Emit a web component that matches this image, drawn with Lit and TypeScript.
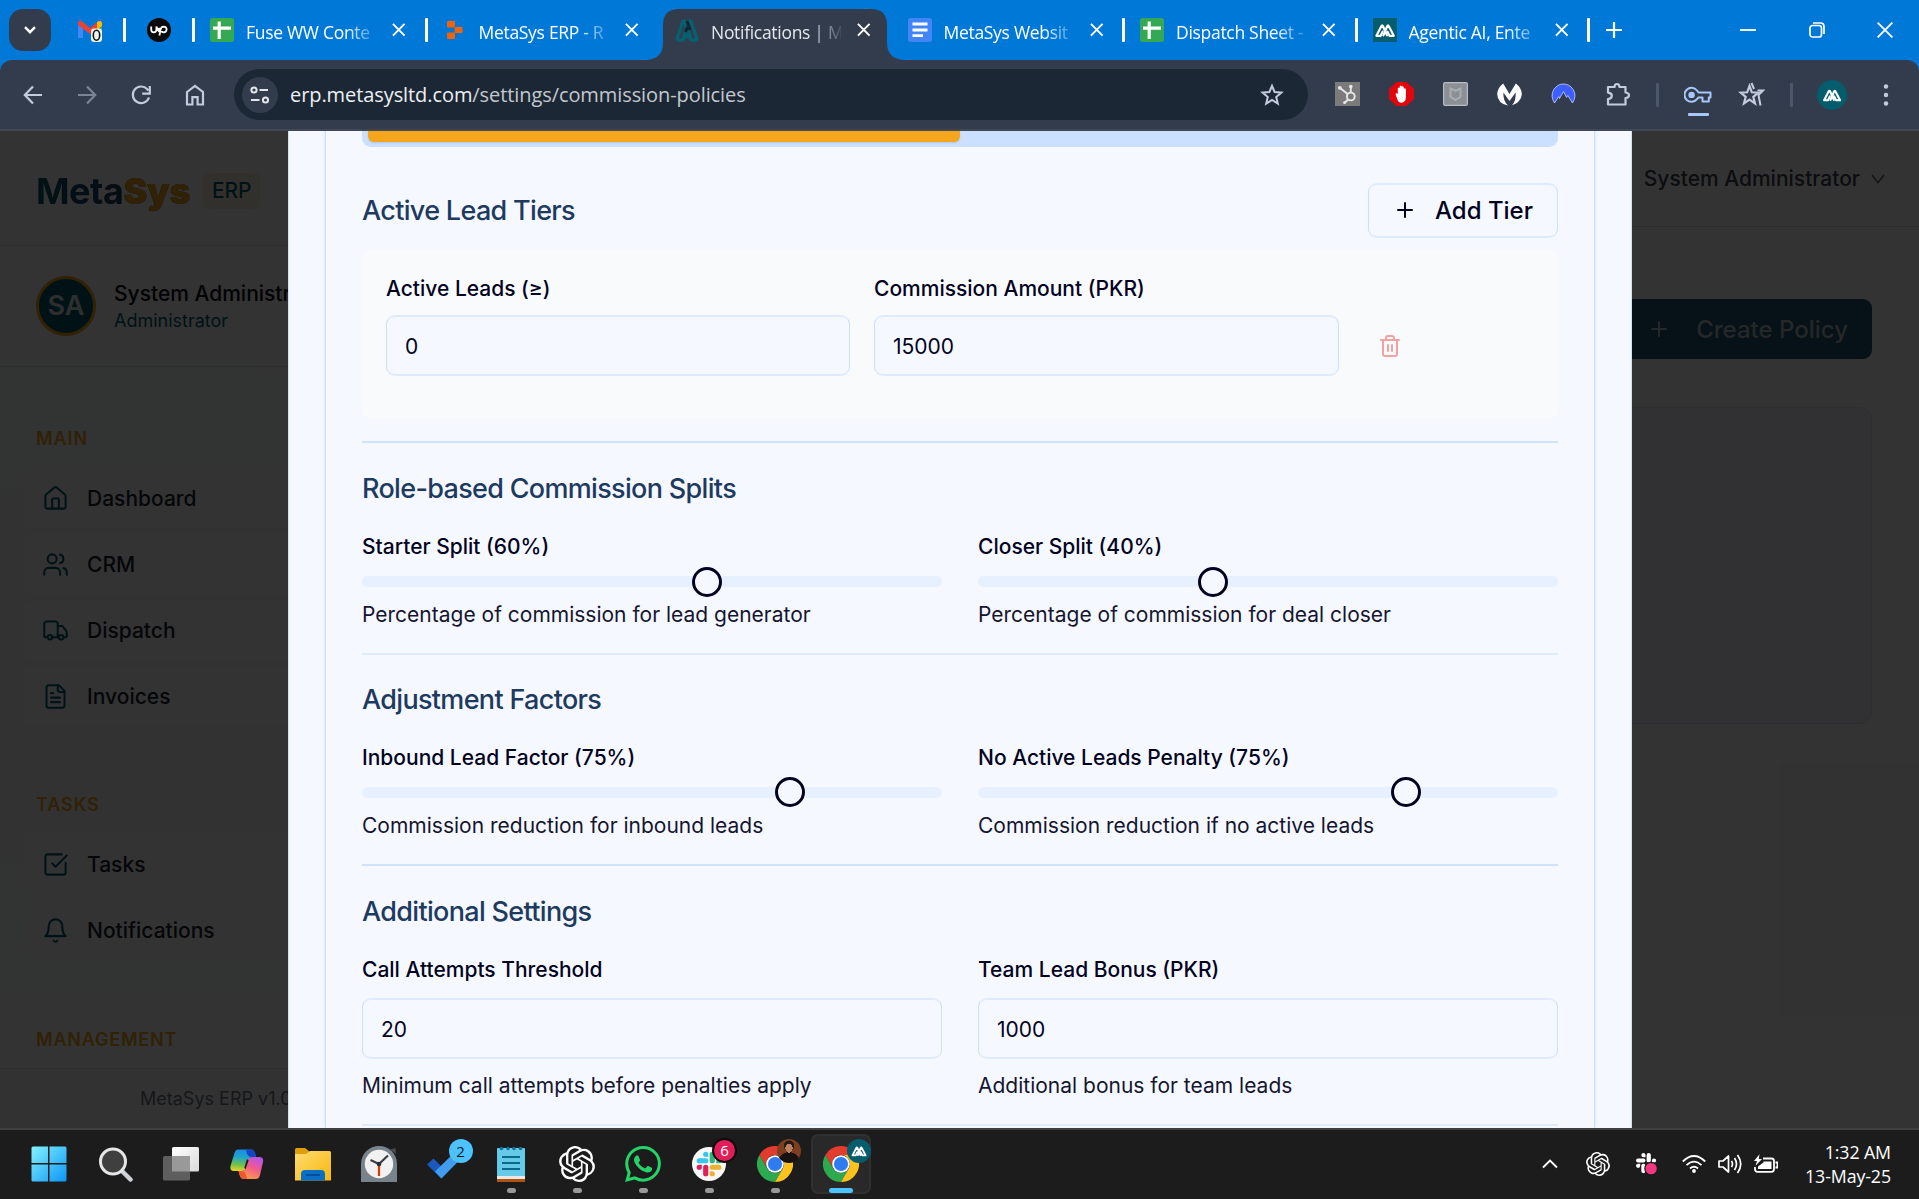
import { LitElement, html, svg, css, nothing, TemplateResult, SVGTemplateResult } from "lit";
import { customElement, property } from "lit/decorators.js";

const icon = (w: number, h: number, box: string, body: SVGTemplateResult, cls = "") =>
  html`<svg class="icon ${cls}" width=${w} height=${h} viewBox=${box} fill="none">${body}</svg>`;

const reset = css`
  * { box-sizing: border-box; }
  .icon { display: block; flex: none; }
`;

/* ---------- shared marks ---------- */

const metaMark = (color: string, width = 2.2) => svg`
  <path d="M14 17.4 10 8.2Q9.2 6.4 8.3 8.2L3.4 17.8H7.6L9.6 13.6" stroke=${color} stroke-width=${width} stroke-linejoin="round" stroke-linecap="round"/>
  <path d="M10.4 17.4 14.2 8.2Q15 6.4 15.8 8.2L20.8 17.8H16.6L14.4 13.6" stroke=${color} stroke-width=${width} stroke-linejoin="round" stroke-linecap="round"/>`;

const knot = svg`<path fill="currentColor" d="M22.2819 9.8211a5.9847 5.9847 0 0 0-.5157-4.9108 6.0462 6.0462 0 0 0-6.5098-2.9A6.0651 6.0651 0 0 0 4.9807 4.1818a5.9847 5.9847 0 0 0-3.9977 2.9 6.0462 6.0462 0 0 0 .7427 7.0966 5.98 5.98 0 0 0 .511 4.9107 6.051 6.051 0 0 0 6.5146 2.9001A5.9847 5.9847 0 0 0 13.2599 24a6.0557 6.0557 0 0 0 5.7718-4.2058 5.9894 5.9894 0 0 0 3.9977-2.9001 6.0557 6.0557 0 0 0-.7475-7.0729zm-9.022 12.6081a4.4755 4.4755 0 0 1-2.8764-1.0408l.1419-.0804 4.7783-2.7582a.7948.7948 0 0 0 .3927-.6813v-6.7369l2.02 1.1686a.071.071 0 0 1 .038.052v5.5826a4.504 4.504 0 0 1-4.4945 4.4944zm-9.6607-4.1254a4.4708 4.4708 0 0 1-.5346-3.0137l.142.0852 4.783 2.7582a.7712.7712 0 0 0 .7806 0l5.8428-3.3685v2.3324a.0804.0804 0 0 1-.0332.0615L9.74 19.9502a4.4992 4.4992 0 0 1-6.1408-1.6464zM2.3408 7.8956a4.485 4.485 0 0 1 2.3655-1.9728V11.6a.7664.7664 0 0 0 .3879.6765l5.8144 3.3543-2.0201 1.1685a.0757.0757 0 0 1-.071 0l-4.8303-2.7865A4.504 4.504 0 0 1 2.3408 7.872zm16.5963 3.8558L13.1038 8.364 15.1192 7.2a.0757.0757 0 0 1 .071 0l4.8303 2.7913a4.4944 4.4944 0 0 1-.6765 8.1042v-5.6772a.79.79 0 0 0-.407-.667zm2.0107-3.0231l-.142-.0852-4.7735-2.7818a.7759.7759 0 0 0-.7854 0L9.409 9.2297V6.8974a.0662.0662 0 0 1 .0284-.0615l4.8303-2.7866a4.4992 4.4992 0 0 1 6.6802 4.66zM8.3065 12.863l-2.02-1.1638a.0804.0804 0 0 1-.038-.0567V6.0742a4.4992 4.4992 0 0 1 7.3757-3.4537l-.142.0805L8.704 5.459a.7948.7948 0 0 0-.3927.6813zm1.0976-2.3654l2.602-1.4998 2.6069 1.4998v2.9994l-2.5974 1.4997-2.6067-1.4997Z"/>`;

const hash = (r: string, b: string, g: string, y: string) => svg`
  <path fill=${r} d="M5.042 15.165a2.528 2.528 0 0 1-2.52 2.523A2.528 2.528 0 0 1 0 15.165a2.527 2.527 0 0 1 2.522-2.52h2.52v2.52zM6.313 15.165a2.527 2.527 0 0 1 2.521-2.52 2.527 2.527 0 0 1 2.521 2.52v6.313A2.528 2.528 0 0 1 8.834 24a2.528 2.528 0 0 1-2.521-2.522v-6.313z"/>
  <path fill=${b} d="M8.834 5.042a2.528 2.528 0 0 1-2.521-2.52A2.528 2.528 0 0 1 8.834 0a2.528 2.528 0 0 1 2.521 2.522v2.52H8.834zM8.834 6.313a2.528 2.528 0 0 1 2.521 2.521 2.528 2.528 0 0 1-2.521 2.521H2.522A2.528 2.528 0 0 1 0 8.834a2.528 2.528 0 0 1 2.522-2.521h6.312z"/>
  <path fill=${g} d="M18.956 8.834a2.528 2.528 0 0 1 2.522-2.521A2.528 2.528 0 0 1 24 8.834a2.528 2.528 0 0 1-2.522 2.521h-2.522V8.834zM17.688 8.834a2.528 2.528 0 0 1-2.523 2.521 2.527 2.527 0 0 1-2.52-2.521V2.522A2.527 2.527 0 0 1 15.165 0a2.528 2.528 0 0 1 2.523 2.522v6.312z"/>
  <path fill=${y} d="M15.165 18.956a2.528 2.528 0 0 1 2.523 2.522A2.528 2.528 0 0 1 15.165 24a2.527 2.527 0 0 1-2.52-2.522v-2.522h2.52zM15.165 17.688a2.527 2.527 0 0 1-2.52-2.523 2.526 2.526 0 0 1 2.52-2.52h6.313A2.527 2.527 0 0 1 24 15.165a2.528 2.528 0 0 1-2.522 2.523h-6.313z"/>`;

const cross = (s: number, w: number) =>
  icon(s, s, "0 0 16 16", svg`<path d="M2 2 14 14M14 2 2 14" stroke="currentColor" stroke-width=${w}/>`);

/* ---------- tab strip ---------- */

const sheet = icon(24, 24, "0 0 24 24", svg`<rect width="24" height="24" rx="2.5" fill="#34a853"/><path d="M9.2 3.5V21M3 10.2H21" stroke="#fff" stroke-width="3.2"/>`);
const doc = icon(24, 24, "0 0 24 24", svg`<rect width="24" height="24" rx="2.5" fill="#4285f4"/><path d="M4.5 6H19.5M4.5 12H19.5M4.5 17.6H15" stroke="#fff" stroke-width="2.8"/>`);
const blocks = icon(24, 24, "0 0 24 24", svg`<g fill="#f26207"><rect x="4" y="3" width="8" height="6.4" rx="1"/><rect x="11.6" y="8.9" width="8" height="6.2" rx="1"/><rect x="4" y="14.6" width="8" height="6.4" rx="1"/></g>`);
const tealMark = icon(24, 24, "0 0 24 24", svg`
  <path d="M14 20 9.6 3.2H8L2.2 20.2Q2 22 4 22H8.2L11 11" stroke="#06606f" stroke-width="3.4" stroke-linejoin="round"/>
  <path d="M10 20 14.4 3.2H16L21.8 20.2Q22 22 20 22H15.8L13 11" stroke="#06606f" stroke-width="3.4" stroke-linejoin="round"/>
  <path d="M12 3 15 12M12.5 9 10.5 14" stroke="#14262f" stroke-width="3"/>`);
const tileMark = icon(24, 24, "0 0 24 24", svg`<rect width="24" height="24" fill="#045c6c"/>${metaMark("#fff", 2.2)}`);

interface Tab { fav: TemplateResult; title: string; active?: boolean; sep?: boolean }
const tabs: Tab[] = [
  { fav: sheet, title: "Fuse WW Conte", sep: true },
  { fav: blocks, title: "MetaSys ERP - R" },
  { fav: tealMark, title: "Notifications | M", active: true },
  { fav: doc, title: "MetaSys Websit", sep: true },
  { fav: sheet, title: "Dispatch Sheet -", sep: true },
  { fav: tileMark, title: "Agentic AI, Ente", sep: true },
];

@customElement("tab-strip")
class TabStrip extends LitElement {
  static styles = [reset, css`
    :host { display: flex; align-items: center; height: 60px; background: #0078d7; color: #fff; padding-left: 9px; font-family: "Open Sans", sans-serif; }
    .search { width: 42px; height: 42px; border-radius: 14px; background: #323c4d; display: grid; place-items: center; margin-right: 27px; }
    .sep { width: 3px; height: 24px; border-radius: 1px; background: #fff; flex: none; }
    .pin { margin-right: 21px; }
    .sep + .pin { margin-left: 21px; }
    .tab { position: relative; display: flex; align-items: center; width: 232.5px; height: 60px; padding-left: 15px; flex: none; }
    .tab > * { position: relative; }
    .tab > .shape { position: absolute; left: -14px; bottom: 0; }
    .title { width: 130px; margin: 4px 15px 0 12px; font-size: 17.5px; line-height: 24px; white-space: nowrap; letter-spacing: -0.3px;
      mask-image: linear-gradient(90deg, #000 76%, transparent 104%); -webkit-mask-image: linear-gradient(90deg, #000 76%, transparent 104%); }
    .active .title { color: #e3e6ec; }
    .active .title, .tab:not(.active) .title { flex: none; }
    .tab .icon { margin-right: 0; }
    .tab .sep { margin-left: 18px; }
    .plus { margin-left: 15px; }
    .controls { display: flex; align-items: center; gap: 52.5px; margin-left: auto; padding-right: 26px; }
  `];
  render() {
    return html`
      <div class="search">${icon(14, 10, "0 0 14 10", svg`<path d="M2 2.2 7 7.2 12 2.2" stroke="#fff" stroke-width="2.4"/>`)}</div>
      ${icon(24, 24, "0 0 24 24", svg`
        <path d="M0 6.5V20H5V9.5Z" fill="#4285f4"/><path d="M19 9.5V20H24V6Z" fill="#34a853"/>
        <path d="M0 3.5Q2 2 4.5 3.8L12 10 19.5 3.8Q22.5 2 24 4.5V7L12 16 0 7Z" fill="#ea4335"/>
        <path d="M19 4.2Q22 1.8 24 4.5V8L19 11.5Z" fill="#fbbc04"/>
        <rect x="13" y="10.5" width="11" height="13.5" rx="3" fill="#eef3ee"/><ellipse cx="18.5" cy="17.3" rx="3.2" ry="5" stroke="#111" stroke-width="1.6"/>`, "pin")}
      <i class="sep"></i>
      ${icon(24, 24, "0 0 24 24", svg`<circle cx="12" cy="12" r="12" fill="#0a0a0a"/><path d="M4.2 8.5V11.5Q4.2 14.3 6.8 14.3 9.4 14.3 9.4 11.5V8.5Q10.8 12.8 13 14.2M12.4 17.5 13.6 11.3Q14.2 8.6 16.7 8.6 19.6 8.7 19.6 11.5 19.4 14.3 16.7 14.3 14 14.2 11.5 10" stroke="#fff" stroke-width="1.8"/>`, "pin")}
      <i class="sep"></i>
      ${tabs.map((t) => html`
        <div class="tab ${t.active ? "active" : ""}">
          ${t.active ? icon(258, 51, "0 0 258 51", svg`<path d="M0 51Q17 50 17 34V16Q17 0 33 0H225Q241 0 241 16V34Q241 50 258 51Z" fill="#323c4d"/>`, "shape") : nothing}
          ${t.fav}<span class="title">${t.title}</span>${cross(15.5, 2)}
          ${t.sep ? html`<i class="sep"></i>` : nothing}
        </div>`)}
      ${icon(18, 18, "0 0 18 18", svg`<path d="M9 1V17M1 9H17" stroke="#fff" stroke-width="2.2"/>`, "plus")}
      <div class="controls">
        ${icon(16, 16, "0 0 16 16", svg`<path d="M0 8H16" stroke="#fff" stroke-width="1.8"/>`)}
        ${icon(16, 16, "0 0 16 16", svg`<rect x="1" y="3.5" width="11.5" height="11.5" rx="2.5" stroke="#fff" stroke-width="1.7"/><path d="M4 1H11.5Q15 1 15 4.5V12" stroke="#fff" stroke-width="1.7"/>`)}
        ${icon(16, 16, "0 0 16 16", svg`<path d="M.6.6 15.4 15.4M15.4.6.6 15.4" stroke="#fff" stroke-width="1.8"/>`)}
      </div>`;
  }
}

/* ---------- address bar ---------- */

@customElement("tool-bar")
class ToolBar extends LitElement {
  static styles = [reset, css`
    :host { display: block; height: 71px; background: #0078d7; }
    .bar { display: flex; align-items: center; height: 71px; padding: 0 0 0 21px; background: #323c4d; border-radius: 12px 12px 0 0; border-bottom: 2px solid #3f4854; color: #c3cbdd; }
    .nav { display: flex; gap: 30px; }
    .omni { display: flex; align-items: center; width: 1074px; height: 51px; margin-left: 27px; padding: 0 24px 0 8px; background: #1c2735; border-radius: 26px; }
    .info { width: 36px; height: 36px; border-radius: 50%; background: #323c4d; display: grid; place-items: center; color: #e3e6ec; }
    .url { flex: 1; margin: 1px 0 0 12px; font: 20px/28px "Open Sans", sans-serif; color: #c4c8ce; letter-spacing: -0.08px; white-space: nowrap; }
    .host { color: #eef0f3; }
    .ext { display: flex; gap: 29px; margin-left: 27px; }
    .sep { width: 3px; height: 24px; background: #4b576b; border-radius: 1px; }
    .s1 { margin: 0 25px 0 24px; }
    .key { display: flex; flex-direction: column; align-items: center; gap: 9px; padding-top: 13px; margin-right: 26px; }
    .key i { width: 21px; height: 3px; border-radius: 1px; background: #a8c7fa; }
    .s2 { margin: 0 24px 0 25px; }
    .me { width: 30px; height: 30px; border-radius: 50%; background: #045c6c; display: grid; place-items: center; }
    .dots { margin-left: 36px; }
  `];
  render() {
    const st = (d: string, w = 2.2) => svg`<path d=${d} stroke="currentColor" stroke-width=${w}/>`;
    return html`<div class="bar">
      <div class="nav">
        ${icon(24, 24, "0 0 24 24", st("M21 12H4.5M12 3.5 3.8 12 12 20.5"))}
        ${icon(24, 24, "0 0 24 24", svg`<g opacity=".5">${st("M3 12H19.5M12 3.5 20.2 12 12 20.5")}</g>`)}
        ${icon(24, 24, "0 0 24 24", svg`${st("M20 14.5A8.3 8.3 0 1 1 18.3 6.2L19.5 7.6")}<path d="M20.8 3V10.6H13.2" stroke="currentColor" stroke-width="2.2"/>`)}
        ${icon(24, 24, "0 0 24 24", st("M4 9 12 2.8 20 9V21.5H14.6V14.2H9.4V21.5H4Z"))}
      </div>
      <div class="omni">
        <div class="info">${icon(20, 20, "0 0 20 20", svg`<g stroke="currentColor" stroke-width="2"><circle cx="4" cy="5" r="2.6"/><path d="M9.5 5H18M1 15H9.5"/><circle cx="15.5" cy="15" r="2.6"/></g>`)}</div>
        <div class="url"><span class="host">erp.metasysltd.com</span>/settings/commission-policies</div>
        ${icon(24, 24, "0 0 24 24", svg`<path d="M12 2.8 14.6 9 21.4 9.6 16.2 14 17.8 20.6 12 17 6.2 20.6 7.8 14 2.6 9.6 9.4 9Z" stroke="currentColor" stroke-width="2"/>`)}
      </div>
      <div class="ext">
        ${icon(25, 24, "0 0 25 24", svg`<rect width="25" height="24" fill="#7b7b7b"/><g stroke="#e8e8e8" stroke-width="1.9"><circle cx="15.8" cy="14.5" r="3.9"/><path d="M15.8 10.5V5M12.6 12 5 6M13 17.5 10 20.5"/></g><g fill="#e8e8e8"><circle cx="15.8" cy="4.5" r="1.8"/><circle cx="4.8" cy="5.8" r="1.9"/><circle cx="9.6" cy="20.6" r="1.5"/></g>`)}
        ${icon(25, 24, "0 0 25 24", svg`<path d="M7.5 0H17.5L25 7V17L17.5 24H7.5L0 17V7Z" fill="#e1060b"/><path d="M7 13.5 6.5 11.8Q7.5 10.5 8.8 12V6.2Q9.8 4.6 10.7 6.2V4.3Q11.7 2.8 12.7 4.3V4.8Q13.8 3.7 14.8 5.2V6.8Q15.9 5.5 16.9 7V15.5Q16.5 20.5 12.5 20.8 9 20.5 8.2 17Z" fill="#fff"/>`)}
        ${icon(25, 24, "0 0 25 24", svg`<rect x=".6" y=".6" width="23.8" height="22.8" rx="1.5" fill="#8b9096" stroke="#b9bcc0" stroke-width="1.2"/><path d="M7.5 6.5 12.5 9 17.5 6.5V14.8L12.5 18 7.5 14.8Z" stroke="#a9adb2" stroke-width="2"/>`)}
        ${icon(25, 24, "0 0 25 24", svg`<path d="M12.5 12 18.8 1.5Q24.8 6 24.8 12 24.4 18 19 21.5L15 23.2Q19.3 18.5 18.6 10.5L12.5 19 6.4 10.5Q5.8 18.5 11 23.6 .5 21.5 .2 12 .3 6 6.2 1.5Z" fill="#fff"/>`)}
        ${icon(25, 24, "0 0 25 24", svg`<path d="M3.5 21Q-1 14 2.8 7.5 6.5 2 12.5 2 18.5 2 22.2 7.5 26 14 21.5 21L16.8 13.5 15.5 15.5 12.5 9.5 8.5 16.5 7.8 14.5Z" fill="#3e5fff" stroke="#c9d2ff" stroke-width=".8"/>`)}
        ${icon(27, 26, "0 0 27 26", svg`<path d="M3 5H9.6Q9.6 2 12 2 14.4 2 14.4 5H20.5V10.5Q24 10.8 24 13.3 24 15.8 20.5 16V22.5H3V17Q6.8 16.6 6.8 13.7 6.8 11 3 10.6Z" stroke="currentColor" stroke-width="2.2" stroke-linejoin="round"/>`)}
      </div>
      <i class="sep s1"></i>
      <div class="key">${icon(28, 18, "0 0 28 18", svg`<g stroke="#a8c7fa" stroke-width="2"><path d="M13 4.5A7 7 0 1 0 13 13.2L14.5 11.5H18.5V15.5H24.8V11.5H26.5V6.5H14.5Z" stroke-linejoin="round"/></g><circle cx="7.6" cy="8.9" r="3.2" fill="#a8c7fa"/>`)}<i></i></div>
      ${icon(27, 26, "0 0 27 26", svg`<path d="M11.5 4 13.8 10.3 20.3 10.7 15.3 14.9 17 21.4 11.5 17.7 6 21.4 7.7 14.9 2.7 10.7 9.2 10.3Z" stroke="currentColor" stroke-width="2.2"/><path d="M13.5 1 16 7M19.5 8.5H25L20.5 13 22.5 23.5" stroke="currentColor" stroke-width="2"/>`)}
      <i class="sep s2"></i>
      <div class="me">${icon(22, 22, "0 0 24 24", metaMark("#fff", 2.3))}</div>
      ${icon(6, 24, "0 0 6 24", svg`<g fill="currentColor"><circle cx="3" cy="3.5" r="2.2"/><circle cx="3" cy="12" r="2.2"/><circle cx="3" cy="20.5" r="2.2"/></g>`, "dots")}
    </div>`;
  }
}

/* ---------- application page ---------- */

const paths = (...ds: string[]) => svg`${ds.map((d) => svg`<path d=${d}/>`)}`;
const glyphs: Record<string, SVGTemplateResult> = {
  home: paths("M15 21v-8a1 1 0 0 0-1-1h-4a1 1 0 0 0-1 1v8", "M3 10a2 2 0 0 1 .709-1.528l7-5.999a2 2 0 0 1 2.582 0l7 5.999A2 2 0 0 1 21 10v9a2 2 0 0 1-2 2H5a2 2 0 0 1-2-2z"),
  users: svg`${paths("M16 21v-2a4 4 0 0 0-4-4H6a4 4 0 0 0-4 4v2", "M22 21v-2a4 4 0 0 0-3-3.87", "M16 3.13a4 4 0 0 1 0 7.75")}<circle cx="9" cy="7" r="4"/>`,
  truck: svg`${paths("M14 18V6a2 2 0 0 0-2-2H4a2 2 0 0 0-2 2v11a1 1 0 0 0 1 1h2", "M15 18H9", "M19 18h2a1 1 0 0 0 1-1v-3.65a1 1 0 0 0-.22-.624l-3.48-4.35A1 1 0 0 0 17.52 8H14")}<circle cx="17" cy="18" r="2"/><circle cx="7" cy="18" r="2"/>`,
  file: paths("M15 2H6a2 2 0 0 0-2 2v16a2 2 0 0 0 2 2h12a2 2 0 0 0 2-2V7Z", "M14 2v4a2 2 0 0 0 2 2h4", "M10 9H8", "M16 13H8", "M16 17H8"),
  check: paths("M21 10.5V19a2 2 0 0 1-2 2H5a2 2 0 0 1-2-2V5a2 2 0 0 1 2-2h12.5", "m9 11 3 3L22 4"),
  bell: paths("M6 8a6 6 0 0 1 12 0c0 7 3 9 3 9H3s3-2 3-9", "M10.3 21a1.94 1.94 0 0 0 3.4 0"),
  plus: paths("M5 12h14", "M12 5v14"),
  trash: paths("M3 6h18", "M19 6v14c0 1-1 2-2 2H7c-1 0-2-1-2-2V6", "M8 6V4c0-1 1-2 2-2h4c1 0 2 1 2 2v2", "M10 11v6", "M14 11v6"),
};
const line = (name: string, size: number, w = 2, cls = "") =>
  icon(size, size, "0 0 24 24", svg`<g stroke="currentColor" stroke-width=${w} stroke-linecap="round" stroke-linejoin="round">${glyphs[name]}</g>`, cls);

@customElement("side-nav")
class SideNav extends LitElement {
  static styles = [reset, css`
    :host { display: flex; flex-direction: column; width: 383px; height: 997px; background: linear-gradient(#fff, #f8fafa 50%, #fdfdfd); font-family: Inter, sans-serif; color: #1c2230; white-space: nowrap; flex: none; }
    .brand { display: flex; align-items: center; gap: 13px; height: 115px; padding: 5px 0 0 36px; border-bottom: 1px solid #dde3e6; }
    .name { font-size: 36px; line-height: 48px; font-weight: 700; letter-spacing: -0.45px; background: linear-gradient(90deg, #045c6c, #1e3a5f 60%); -webkit-background-clip: text; background-clip: text; color: transparent; }
    .name b { color: #f5a31a; }
    .tag { width: 57px; height: 36px; border-radius: 6px; background: #fbf1de; color: #045c6c; font-size: 21px; line-height: 35px; font-weight: 500; text-align: center; letter-spacing: -0.2px; }
    .user { display: flex; align-items: center; gap: 18px; height: 121px; padding-left: 36px; border-bottom: 1px solid #dde3e6; }
    .ava { width: 60px; height: 60px; border-radius: 50%; border: 3px solid #f5a31a; background: #045c6c; color: #dfe3e6; font-size: 27px; line-height: 53px; font-weight: 600; text-align: center; }
    .who { font-size: 21px; line-height: 30px; font-weight: 500; color: #0a0a14; }
    .role { font-size: 18px; line-height: 24px; color: #045c6c; }
    h4 { margin: 0; padding-left: 36px; font-size: 18px; line-height: 24px; font-weight: 600; letter-spacing: .9px; color: #f5a31a; }
    .g0 { margin-top: 60px; } .g1 { margin-top: 67px; } .g2 { margin-top: 68px; letter-spacing: .8px; }
    .list { display: flex; flex-direction: column; gap: 6px; margin: 17px 24px 0; }
    .item { display: flex; align-items: center; gap: 19px; height: 60px; padding-left: 17.5px; border-radius: 9px; background: rgba(255,255,255,.5); font-size: 21px; font-weight: 500; }
    .item span { margin-left: -0.5px; }
    .item .icon { color: #045c6c; }
    .foot { margin-top: auto; height: 60px; border-top: 1px solid #e2e6e8; padding-left: 140px; font-size: 18px; line-height: 60px; color: #6b7280; background: #fbfbfb; }
  `];
  render() {
    const groups = [
      { t: "MAIN", items: [["home", "Dashboard"], ["users", "CRM"], ["truck", "Dispatch"], ["file", "Invoices"]] },
      { t: "TASKS", items: [["check", "Tasks"], ["bell", "Notifications"]] },
      { t: "MANAGEMENT", items: [] as string[][] },
    ];
    return html`
      <div class="brand"><div class="name">Meta<b>Sys</b></div><div class="tag">ERP</div></div>
      <div class="user"><div class="ava">SA</div><div><div class="who">System Administrator</div><div class="role">Administrator</div></div></div>
      ${groups.map((g, i) => html`<h4 class="g${i}">${g.t}</h4>
        ${g.items.length ? html`<div class="list">${g.items.map(([ic, l]) => html`<div class="item">${line(ic, 27, 1.8)}<span>${l}</span></div>`)}</div>` : nothing}`)}
      <div class="foot">MetaSys ERP v1.0</div>`;
  }
}

@customElement("page-main")
class PageMain extends LitElement {
  static styles = [reset, css`
    :host { display: block; flex: 1; background: #fcfcfc; font-family: Inter, sans-serif; }
    .top { display: flex; justify-content: flex-end; align-items: center; gap: 11px; height: 96px; padding-right: 34px; border-bottom: 1px solid #d9dce2; background: #fff; font-size: 21px; font-weight: 500; color: #3b4252; }
    .body { display: flex; flex-direction: column; align-items: stretch; padding: 72px 47px 0 48px; }
    .create { align-self: flex-end; display: flex; align-items: center; gap: 25px; height: 60px; padding: 0 24px; border-radius: 9px; background: #1e5a78; color: #b9c1c7; font-size: 24px; font-weight: 500; }
    .card { height: 317px; margin-top: 48px; border: 1px solid #e2e6f0; border-radius: 12px; background: #f3f5fc; }
  `];
  render() {
    return html`<div class="top"><span>System Administrator</span>${icon(14, 10, "0 0 14 10", svg`<path d="M1 1 7 8.5 13 1" stroke="#666" stroke-width="1.5"/>`)}</div>
      <div class="body"><div class="create">${line("plus", 24)}<span>Create Policy</span></div><div class="card"></div></div>`;
  }
}

/* ---------- policy dialog ---------- */

@customElement("range-field")
class RangeField extends LitElement {
  @property() label = "";
  @property() hint = "";
  @property({ type: Number }) at = 0;
  static styles = [reset, css`
    :host { display: flex; flex-direction: column; flex: 1; font-size: 21px; line-height: 30px; }
    .label { font-weight: 500; }
    .track { height: 11px; margin: 14px 0 13px; border-radius: 6px; background: #e6f0ff; display: flex; align-items: center; }
    .thumb { width: 30px; height: 30px; margin-left: -15px; border: 3px solid #030321; border-radius: 50%; background: #f5f9ff; flex: none; }
    .hint { color: #15152f; }
  `];
  render() {
    return html`<div class="label">${this.label}</div>
      <div class="track"><span style="width:${this.at}px"></span><i class="thumb"></i></div>
      <div class="hint">${this.hint}</div>`;
  }
}

@customElement("text-field")
class TextField extends LitElement {
  @property() label = "";
  @property() value = "";
  @property() hint = "";
  static styles = [reset, css`
    :host { display: flex; flex-direction: column; flex: 1; font-size: 21px; line-height: 30px; }
    .label { font-weight: 500; }
    .box { display: flex; align-items: center; height: 61px; margin-top: var(--field-gap, 11px); padding: 2px 18px 0; border: 1px solid #cbe0ff; border-width: 2px 1px; border-color: #deebff #cbe0ff; border-radius: 9px; background: #f5f9ff; }
    .hint { margin-top: 12px; color: #15152f; }
  `];
  render() {
    return html`<div class="label">${this.label}</div><div class="box">${this.value}</div>
      ${this.hint ? html`<div class="hint">${this.hint}</div>` : nothing}`;
  }
}

@customElement("policy-dialog")
class PolicyDialog extends LitElement {
  static styles = [reset, css`
    :host { display: block; box-sizing: border-box; flex: none; width: 1344px; height: 997px; overflow: hidden; padding: 0 36px; background: #f5f9ff; border: 1px solid #cbe0ff; border-width: 0 1px; font-family: Inter, sans-serif; color: #030321; white-space: nowrap; }
    .card { height: 997px; padding: 0 36px; border: 1px solid #cbe0ff; border-width: 0 1px; box-shadow: 0 0 3px rgba(60,90,150,.16); overflow: hidden; }
    .tabs { height: 16px; padding: 0 6px 5px; background: #cbe0ff; border-radius: 0 0 9px 9px; }
    .tabs i { display: block; width: 592px; height: 11px; background: #f5a61c; border-radius: 0 0 6px 6px; box-shadow: 0 1px 2px rgba(0,0,0,.12); }
    .head { display: flex; align-items: center; justify-content: space-between; height: 54px; margin-top: 36px; }
    .head h3 { padding-top: 2px; }
    h3 { margin: 0; font-size: 27px; line-height: 36px; font-weight: 500; letter-spacing: -0.675px; color: #1e3a5f; }
    .add { display: flex; align-items: center; gap: 18px; height: 55px; padding: 0 24px; border: 1px solid #cbe0ff; border-width: 2px 1px; border-color: #deebff #cbe0ff; border-radius: 9px; font-size: 24px; font-weight: 500; }
    .panel { display: grid; grid-template-columns: 464px 465px 1fr; gap: 24px; align-items: start; height: 169px; margin-top: 12px; padding: 25px 24px 23px; border-radius: 9px; background: #f9fafc; }
    .del { color: #f3a1a1; padding: 60px 0 0 15px; }
    section { height: 211.5px; padding-top: 28px; border-top: 2px solid #cfe2ff; }
    section.soft { padding-top: 27px; border-top-color: #dfebff; }
    .first { margin-top: 23px; }
    .last { height: 260px; --field-gap: 13px; }
    .end { height: 2px; background: #dfebff; }
    .cols { display: flex; gap: 36px; margin-top: 25px; }
  `];
  render() {
    return html`<div class="card">
      <div class="tabs"><i></i></div>
      <div class="head"><h3>Active Lead Tiers</h3><div class="add">${line("plus", 24)}<span>Add Tier</span></div></div>
      <div class="panel">
        <text-field label="Active Leads (≥)" value="0"></text-field>
        <text-field label="Commission Amount (PKR)" value="15000"></text-field>
        <div class="del">${line("trash", 24)}</div>
      </div>
      <section class="first"><h3>Role-based Commission Splits</h3><div class="cols">
        <range-field label="Starter Split (60%)" hint="Percentage of commission for lead generator" .at=${345}></range-field>
        <range-field label="Closer Split (40%)" hint="Percentage of commission for deal closer" .at=${235}></range-field>
      </div></section>
      <section class="soft"><h3>Adjustment Factors</h3><div class="cols">
        <range-field label="Inbound Lead Factor (75%)" hint="Commission reduction for inbound leads" .at=${428}></range-field>
        <range-field label="No Active Leads Penalty (75%)" hint="Commission reduction if no active leads" .at=${428}></range-field>
      </div></section>
      <section class="last"><h3>Additional Settings</h3><div class="cols">
        <text-field label="Call Attempts Threshold" value="20" hint="Minimum call attempts before penalties apply"></text-field>
        <text-field label="Team Lead Bonus (PKR)" value="1000" hint="Additional bonus for team leads"></text-field>
      </div></section>
      <div class="end"></div>
    </div>`;
  }
}

/* ---------- taskbar ---------- */

const chrome = svg`<path d="M3.2 12A24 24 0 0 1 44.8 12H24A12 12 0 0 0 13.6 30Z" fill="#e33b2e"/>
  <path d="M3.2 12 13.6 30A12 12 0 0 0 34.4 30L24 48A24 24 0 0 1 3.2 12Z" fill="#2da94f"/>
  <path d="M44.8 12H24A12 12 0 0 1 34.4 30L24 48A24 24 0 0 0 44.8 12Z" fill="#fcc31e"/>
  <circle cx="24" cy="24" r="11.8" fill="#fff"/><circle cx="24" cy="24" r="9.4" fill="#2f7bf0"/>`;

@customElement("task-bar")
class TaskBar extends LitElement {
  static styles = [reset, css`
    :host { display: flex; align-items: flex-start; box-sizing: border-box; height: 71px; padding-left: 16px; background: #1c1c1c; border-top: 2px solid #404042; font-family: "Open Sans", sans-serif; color: #fff; }
    .apps { display: flex; }
    .app { position: relative; width: 66px; height: 68px; display: flex; justify-content: center; align-items: center; }
    .app .icon { position: relative; }
    .app.on::before { content: ""; position: absolute; inset: 4px 3px 4px 3px; border-radius: 7px; background: #292929; border: 2px solid #303030; }
    .bar { position: absolute; bottom: 5px; width: 9px; height: 5px; border-radius: 3px; background: #999; }
    .on .bar { width: 24px; background: #4cc2ff; }
    .app .badge { position: absolute; display: grid; place-items: center; width: 24px; height: 24px; border-radius: 50%; left: 34.5px; top: 9px; overflow: hidden; font-size: 15px; line-height: 24px; }
    .app .two { left: 36.5px; background: #4cc2ff; color: #0a1a22; }
    .app .six { left: 38px; width: 21px; height: 21px; top: 10px; line-height: 21px; background: #e01e5a; box-shadow: 0 0 0 2px #12080c; }
    .photo { background: radial-gradient(ellipse 4px 5px at 50% 38%, #b98166 0 90%, transparent 92%), radial-gradient(circle at 50% 28%, #2b1a14 0 5px, transparent 5.5px), radial-gradient(ellipse 11px 10px at 50% 95%, #17110f 0 95%, transparent 98%), #7d3f20; }
    .app .meta { left: 38.5px; background: #045c6c; }
    .tray { display: flex; align-items: center; height: 68px; margin-left: auto; padding-right: 28px; }
    .gap-l { margin-left: 28px; } .gap-m { margin-left: 26px; } .gap-n { margin-left: 25px; } .gap-s { margin-left: 12px; }
    .clock { width: 92px; margin: 0 0 1px 21.5px; text-align: right; font-size: 17.8px; line-height: 24px; letter-spacing: -0.1px; white-space: nowrap; display: flex; flex-direction: column; align-items: flex-end; }
  `];
  render() {
    const app = (art: TemplateResult, badge: unknown = nothing, state = "") =>
      html`<div class="app ${state}">${art}${badge}${state ? html`<i class="bar"></i>` : nothing}</div>`;
    return html`<div class="apps">
      ${app(icon(36, 36, "0 0 36 36", svg`<defs><linearGradient id="w" x1="0" y1="0" x2="36" y2="36" gradientUnits="userSpaceOnUse"><stop stop-color="#85f4ff"/><stop offset="1" stop-color="#0a93f5"/></linearGradient></defs><path fill="url(#w)" d="M2 .5H17V17H.5V2Q.5.5 2 .5ZM18.5.5H34Q35.5.5 35.5 2V17H18.5ZM.5 18.5H17V35.5H2Q.5 35.5.5 34ZM18.5 18.5H35.5V34Q35.5 35.5 34 35.5H18.5Z"/>`))}
      ${app(icon(36, 36, "0 0 36 36", svg`<path d="M25 25 33.5 33.5" stroke="#cfd2d8" stroke-width="4.5" stroke-linecap="round"/><circle cx="16" cy="15.5" r="12.5" fill="#3f3f3f" stroke="#e6e6e8" stroke-width="3"/>`))}
      ${app(icon(36, 36, "0 0 36 36", svg`<defs><linearGradient id="v" x1="0" y1="0" x2="1" y2="1"><stop stop-color="#fff"/><stop offset="1" stop-color="#dadada"/></linearGradient></defs><rect x="9" y="1" width="27" height="24.5" rx="1.5" fill="url(#v)"/><rect x="0" y="10" width="27" height="24.5" rx="1.5" fill="#5e5e5e"/><path d="M9 10H27V25.5H9Z" fill="#999"/>`))}
      ${app(icon(36, 36, "0 0 36 36", svg`<defs><linearGradient id="c1" x1="8" y1="3" x2="6" y2="25" gradientUnits="userSpaceOnUse"><stop stop-color="#1c8be8"/><stop offset=".35" stop-color="#1fa4c9"/><stop offset=".7" stop-color="#6fc04a"/><stop offset="1" stop-color="#ecd72a"/></linearGradient><linearGradient id="c2" x1="30" y1="11" x2="20" y2="33" gradientUnits="userSpaceOnUse"><stop stop-color="#b453ee"/><stop offset=".5" stop-color="#f05a8e"/><stop offset="1" stop-color="#ff9a4a"/></linearGradient></defs>
        <path d="M9 3.5H22Q25 3.5 26 7L27 11H24Q20.5 11 19.5 14L17 22Q16 25 13 25H5Q.5 25 1.5 20L5.5 7Q6.5 3.5 9 3.5Z" fill="url(#c1)"/><path d="M17 3.5H22Q25 3.5 26 7L27 11H22Q18 11 17 3.5Z" fill="#1545c4"/>
        <path d="M27 33H15Q12 33 11 30L9.5 25H12.5Q15.5 25 16.5 22L19 14Q20 11 23.5 11H30Q35 11 34 16L31 29Q30 33 27 33Z" fill="url(#c2)"/><path d="M9.5 25H14Q17 27 18 33H15Q12 33 11 30Z" fill="#f0562e"/><path d="M19.6 14.5 16.4 23.5 15.4 21.5 18 13Z" fill="#1c1c1c"/>`))}
      ${app(icon(36, 36, "0 0 36 36", svg`<defs><linearGradient id="f" x1="0" y1="0" x2="1" y2="1"><stop stop-color="#ffdc72"/><stop offset="1" stop-color="#f8b70c"/></linearGradient></defs><path d="M0 3.5Q0 2 1.5 2H10L14.5 5.5V9H0Z" fill="#dd9f0b"/><path d="M0 8H11L15 5H34.5Q36 5 36 6.5V34.5H0Z" fill="url(#f)"/><path d="M6 34.5V28Q6 24 10 24H26Q30 24 30 28V34.5Z" fill="#0a6fc6"/><path d="M11 29H25" stroke="#064d8d" stroke-width="1.8"/>`))}
      ${app(icon(36, 36, "0 0 36 36", svg`<path d="M29 3.5 34.5 2 35 8" fill="#4a4a4a"/><path d="M0 18A18 18 0 0 1 36 18V36H0Z" fill="#79838c"/><circle cx="18" cy="18" r="14.2" fill="#f1f1f1"/><path d="M18 18 9.5 14M18 18 27 9.5" stroke="#3a3f45" stroke-width="2.2"/><path d="M18 19V30" stroke="#d83b01" stroke-width="2.2"/><circle cx="18" cy="18" r="2.3" fill="#2a2e33"/>`))}
      ${app(icon(36, 36, "0 0 36 36", svg`<path d="M0 18.5 6.5 12.5 16.5 22.5 14 32.5Z" fill="#1b57bd"/><path d="M8 25.5 30 4 35.5 11 14.5 32.5Z" fill="#3f9cee"/>`), html`<span class="badge two">2</span>`)}
      ${app(icon(28, 36, "0 0 28 36", svg`<rect y="33" width="28" height="3" fill="#b3530b"/><rect y="29.5" width="28" height="3.5" fill="#e8e8e8"/><rect y="2" width="28" height="28" rx="1" fill="#66c9e8"/><path d="M5 11H23M5 17H23M5 23H23" stroke="#056a8c" stroke-width="2"/><g fill="#0d7599"><circle cx="4.5" cy="2.5" r="1.8"/><circle cx="11" cy="2.5" r="1.8"/><circle cx="17" cy="2.5" r="1.8"/><circle cx="23.5" cy="2.5" r="1.8"/></g>`), nothing, "run")}
      ${app(icon(36, 36, "0 0 24 24", knot), nothing, "run")}
      ${app(icon(36, 36, "0 0 24 24", svg`<path fill="#25d366" d="M17.472 14.382c-.297-.149-1.758-.867-2.03-.967-.273-.099-.471-.148-.67.15-.197.297-.767.966-.94 1.164-.173.199-.347.223-.644.075-.297-.15-1.255-.463-2.39-1.475-.883-.788-1.48-1.761-1.653-2.059-.173-.297-.018-.458.13-.606.134-.133.298-.347.446-.52.149-.174.198-.298.298-.497.099-.198.05-.371-.025-.52-.075-.149-.669-1.612-.916-2.207-.242-.579-.487-.5-.669-.51-.173-.008-.371-.01-.57-.01-.198 0-.52.074-.792.372-.272.297-1.04 1.016-1.04 2.479 0 1.462 1.065 2.875 1.213 3.074.149.198 2.096 3.2 5.077 4.487.709.306 1.262.489 1.694.625.712.227 1.36.195 1.871.118.571-.085 1.758-.719 2.006-1.413.248-.694.248-1.289.173-1.413-.074-.124-.272-.198-.57-.347m-5.421 7.403h-.004a9.87 9.87 0 01-5.031-1.378l-.361-.214-3.741.982.998-3.648-.235-.374a9.86 9.86 0 01-1.51-5.26c.001-5.45 4.436-9.884 9.888-9.884 2.64 0 5.122 1.03 6.988 2.898a9.825 9.825 0 012.893 6.994c-.003 5.45-4.437 9.884-9.885 9.884m8.413-18.297A11.815 11.815 0 0012.05 0C5.495 0 .16 5.335.157 11.892c0 2.096.547 4.142 1.588 5.945L.057 24l6.305-1.654a11.882 11.882 0 005.683 1.448h.005c6.554 0 11.89-5.335 11.893-11.893a11.821 11.821 0 00-3.48-8.413Z"/>`), nothing, "run")}
      ${app(icon(34, 34, "-4.5 -4.5 33 33", svg`<circle cx="12" cy="12" r="16.5" fill="#f7f7f7"/>${hash("#e01e5a", "#36c5f0", "#2eb67d", "#ecb22e")}`), html`<span class="badge six">6</span>`, "run")}
      ${app(icon(36, 36, "0 0 48 48", chrome), html`<span class="badge photo"></span>`, "run")}
      ${app(icon(36, 36, "0 0 48 48", chrome), html`<span class="badge meta">${icon(18, 18, "0 0 24 24", metaMark("#fff", 2.6))}</span>`, "run on")}
    </div>
    <div class="tray">
      ${icon(16, 10, "0 0 16 10", svg`<path d="M1 8.5 8 1.5 15 8.5" stroke="#fff" stroke-width="1.9"/>`)}
      ${icon(24, 24, "0 0 24 24", knot, "gap-l")}
      ${icon(21, 22, "0 0 25 26", svg`${hash("#fff", "#fff", "#fff", "#fff")}<circle cx="18" cy="18.5" r="7.5" fill="#f43580" stroke="#1c1c1c" stroke-width="1.5"/>`, "gap-m")}
      ${icon(24, 18, "0 0 24 18", svg`<g stroke="#fff" stroke-width="1.8"><path d="M.8 6.5Q12-4.5 23.2 6.5M4.5 10.2Q12 3 19.5 10.2M8 13.5Q12 10 16 13.5"/></g><circle cx="12" cy="16" r="1.9" fill="#fff"/>`, "gap-n")}
      ${icon(24, 20, "0 0 24 20", svg`<path d="M1 7H5L10.5 2V18L5 13H1Z" stroke="#fff" stroke-width="1.7" stroke-linejoin="round"/><path d="M13.5 7Q15.5 10 13.5 13M16.5 4Q20.5 10 16.5 16M19.5 1Q26 10 19.5 19" stroke="#fff" stroke-width="1.7"/>`, "gap-s")}
      ${icon(24, 20, "0 0 24 20", svg`<path d="M9 4.5H17.5Q20 4.5 20 7V15Q20 17.8 17.5 17.8H3.5Q1 17.8 1 15V13M21.5 8.5H23.5V13.5H21.5" stroke="#fff" stroke-width="1.8"/><path d="M9.5 7.5H17.5V15H4V12.5L9.5 8.5Z" fill="#fff"/><path d="M5.5.2 0 7H3L1.5 11.8 8 5H4.8Z" fill="#fff"/>`, "gap-s")}
      <div class="clock"><span>1:32 AM</span><span>13-May-25</span></div>
    </div>`;
  }
}

@customElement("app-root")
class AppRoot extends LitElement {
  static styles = [reset, css`
    :host { display: flex; flex-direction: column; width: 1919px; height: 1199px; overflow: hidden; }
    .view { position: relative; display: flex; height: 997px; overflow: hidden; }
    .scrim { position: absolute; inset: 0; display: flex; padding-left: 288px; background: rgba(0,0,0,.8); }
  `];
  render() {
    return html`<tab-strip></tab-strip><tool-bar></tool-bar>
      <div class="view"><side-nav></side-nav><page-main></page-main><div class="scrim"><policy-dialog></policy-dialog></div></div>
      <task-bar></task-bar>`;
  }
}
